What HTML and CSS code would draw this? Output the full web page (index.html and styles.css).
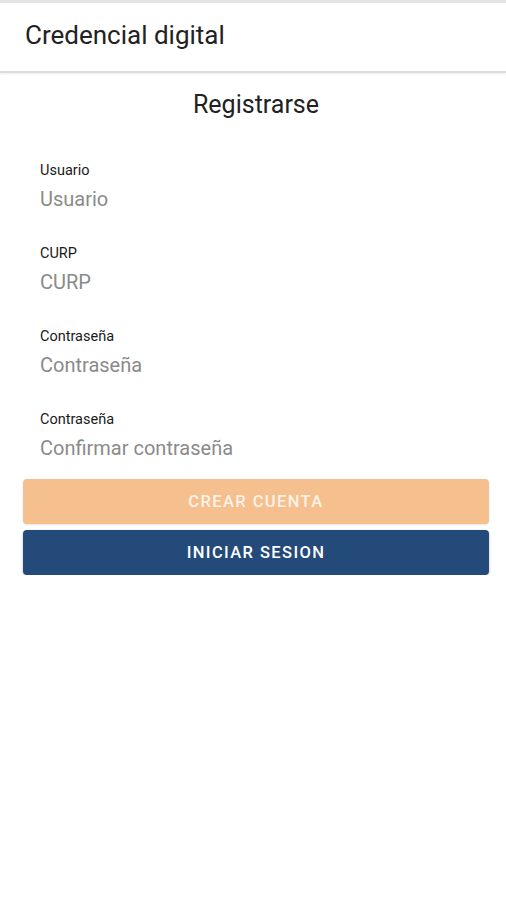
FILE: index.html
```html
<!DOCTYPE html>
<html lang="es">
<head>
    <meta charset="UTF-8">
    <meta name="viewport" content="width=device-width, initial-scale=1.0">
    <title>Credencial digital</title>
    <link rel="stylesheet" href="styles.css">
</head>
<body>
    <header class="toolbar">
        <h1>Credencial digital</h1>
    </header>

    <main class="content">
        <section class="card">
            <h2>Registrarse</h2>
            <div class="field">
                <label>Usuario</label>
                <input type="text" placeholder="Usuario">
            </div>
            <div class="field">
                <label>CURP</label>
                <input type="text" placeholder="CURP">
            </div>
            <div class="field">
                <label>Contraseña</label>
                <input type="password" placeholder="Contraseña">
            </div>
            <div class="field">
                <label>Contraseña</label>
                <input type="password" placeholder="Confirmar contraseña">
            </div>
        </section>

        <div class="actions">
            <button class="btn btn-create" disabled>Crear cuenta</button>
            <button class="btn btn-login">Iniciar sesion</button>
        </div>
    </main>
</body>
</html>
```

FILE: styles.css
```css
body {
    margin: 0;
    background: #fff;
    font-family: Roboto, "Noto Sans", sans-serif;
    color: #222;
}
.toolbar {
    box-sizing: border-box;
    height: 73px;
    display: flex;
    align-items: center;
    padding: 0 25px 4px;
    border-top: 3px solid #e4e4e4;
    border-bottom: 2px solid #dcdcdc;
    box-shadow: 0 1px 2px rgba(0, 0, 0, 0.08);
}
.toolbar h1 {
    margin: 0;
    font-size: 26px;
    font-weight: 400;
    color: #222;
}
.content {
    padding: 0 17px 0 23px;
}
.card {
    padding: 17px 0 0 40px;
    margin-left: -23px;
    box-shadow: -3px 0 3px -3px rgba(0, 0, 0, 0.12);
}
.card h2 {
    margin: 0 0 43px -17px;
    text-align: center;
    font-size: 25px;
    line-height: 29px;
    font-weight: 400;
    color: #222;
}
.field {
    display: flex;
    flex-direction: column;
    height: 83px;
}
.field label {
    font-size: 14.5px;
    line-height: 18px;
    color: #1a1a1a;
}
.field input {
    border: none;
    outline: none;
    padding: 0;
    margin-top: 6px;
    font-family: inherit;
    font-size: 20px;
    line-height: 26px;
    color: #222;
    background: transparent;
}
.field input::placeholder {
    color: #8a8a8a;
}
.actions {
    display: flex;
    flex-direction: column;
    gap: 6px;
    margin-top: -15px;
}
.btn {
    height: 45px;
    border: none;
    border-radius: 4px;
    font-family: inherit;
    font-size: 16.5px;
    font-weight: 500;
    letter-spacing: 1.4px;
    text-transform: uppercase;
    color: #fff;
    box-shadow: 0 1px 3px rgba(0, 0, 0, 0.25);
    cursor: pointer;
}
.btn-create {
    background: #f5c08e;
    color: #fdf2e8;
    box-shadow: 0 1px 2px rgba(0, 0, 0, 0.1);
}
.btn-login {
    background: #244a7a;
}
```
